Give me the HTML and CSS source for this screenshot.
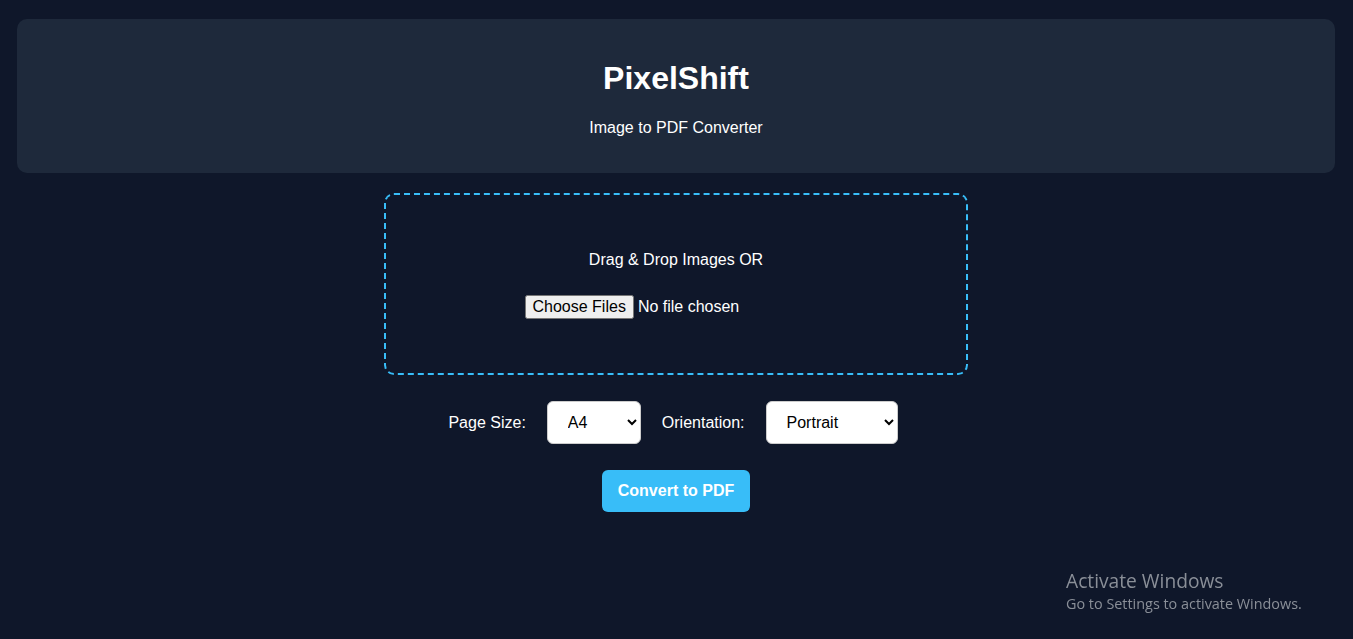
FILE: index.html
```html
<!DOCTYPE html>
<html lang="en">
<head>
<meta charset="utf-8">
<title>PixelShift</title>
<link rel="stylesheet" href="styles.css">
</head>
<body>
<div class="page">
  <header class="hero">
    <h1 class="hero-title">PixelShift</h1>
    <p class="hero-sub">Image to PDF Converter</p>
  </header>

  <section class="dropzone">
    <p class="drop-text">Drag &amp; Drop Images OR</p>
    <input class="file-input" type="file" multiple accept="image/*">
  </section>

  <div class="options">
    <label class="opt-label" for="size">Page Size:</label>
    <select id="size" class="opt-select sel-size">
      <option>A4</option>
      <option>Letter</option>
    </select>
    <label class="opt-label" for="orient">Orientation:</label>
    <select id="orient" class="opt-select sel-orient">
      <option>Portrait</option>
      <option>Landscape</option>
    </select>
  </div>

  <div class="actions">
    <button class="convert-btn" type="button">Convert to PDF</button>
  </div>
</div>

<div class="watermark">
  <div class="wm-title">Activate Windows</div>
  <div class="wm-sub">Go to Settings to activate Windows.</div>
</div>
</body>
</html>
```

FILE: styles.css
```css
html, body {
  margin: 0;
  padding: 0;
  background: #0f172a;
  height: 100%;
}

body {
  font-family: "Liberation Sans", Arial, sans-serif;
  color: #ffffff;
}

.page {
  padding: 19px 18px 0 17px;
  display: flex;
  flex-direction: column;
  align-items: center;
}

.hero {
  align-self: stretch;
  background: #1e293b;
  border-radius: 10px;
  padding: 20px;
  text-align: center;
}

.hero-title {
  margin: 21px 0 22px;
  font-size: 32px;
  font-weight: bold;
  line-height: 37px;
}

.hero-sub {
  margin: 16px 0;
  font-size: 16px;
  line-height: 18px;
}

.dropzone {
  margin-top: 20px;
  width: 580px;
  height: 178px;
  box-sizing: content-box;
  border: 2px dashed #38bdf8;
  border-radius: 10px;
  display: flex;
  flex-direction: column;
  align-items: center;
  padding: 0;
}

.drop-text {
  margin: 56px 0 0;
  font-size: 16px;
  line-height: 18px;
}

.file-input {
  margin-top: 26px;
  margin-left: 0;
  font-family: "Liberation Sans", Arial, sans-serif;
  font-size: 16px;
  color: #ffffff;
  width: 303px;
}

.options {
  margin-top: 26px;
  display: flex;
  align-items: center;
  gap: 21px;
  padding-right: 6px;
}

.opt-label {
  font-size: 16px;
  line-height: 18px;
  color: #ffffff;
}

.opt-select {
  height: 43px;
  border: 1px solid #cccccc;
  border-radius: 6px;
  background: #ffffff;
  color: #000000;
  font-family: "Liberation Sans", Arial, sans-serif;
  font-size: 16px;
  padding: 0 6px 0 16px;
}

.sel-size { width: 94px; }
.sel-orient { width: 132px; }

.actions {
  margin-top: 26px;
}

.convert-btn {
  background: #38bdf8;
  color: #ffffff;
  border: none;
  border-radius: 6px;
  padding: 12px 16px;
  font-family: "Liberation Sans", Arial, sans-serif;
  font-size: 16px;
  font-weight: bold;
  line-height: 18px;
  white-space: nowrap;
  height: 42px;
  cursor: pointer;
}

.watermark {
  position: fixed;
  left: 1066px;
  top: 569px;
  color: #8a8f98;
  font-family: "Open Sans", "Noto Sans", sans-serif;
  pointer-events: none;
}

.wm-title {
  font-size: 19.2px;
  line-height: 24px;
}

.wm-sub {
  font-size: 14.4px;
  line-height: 21px;
}
```
